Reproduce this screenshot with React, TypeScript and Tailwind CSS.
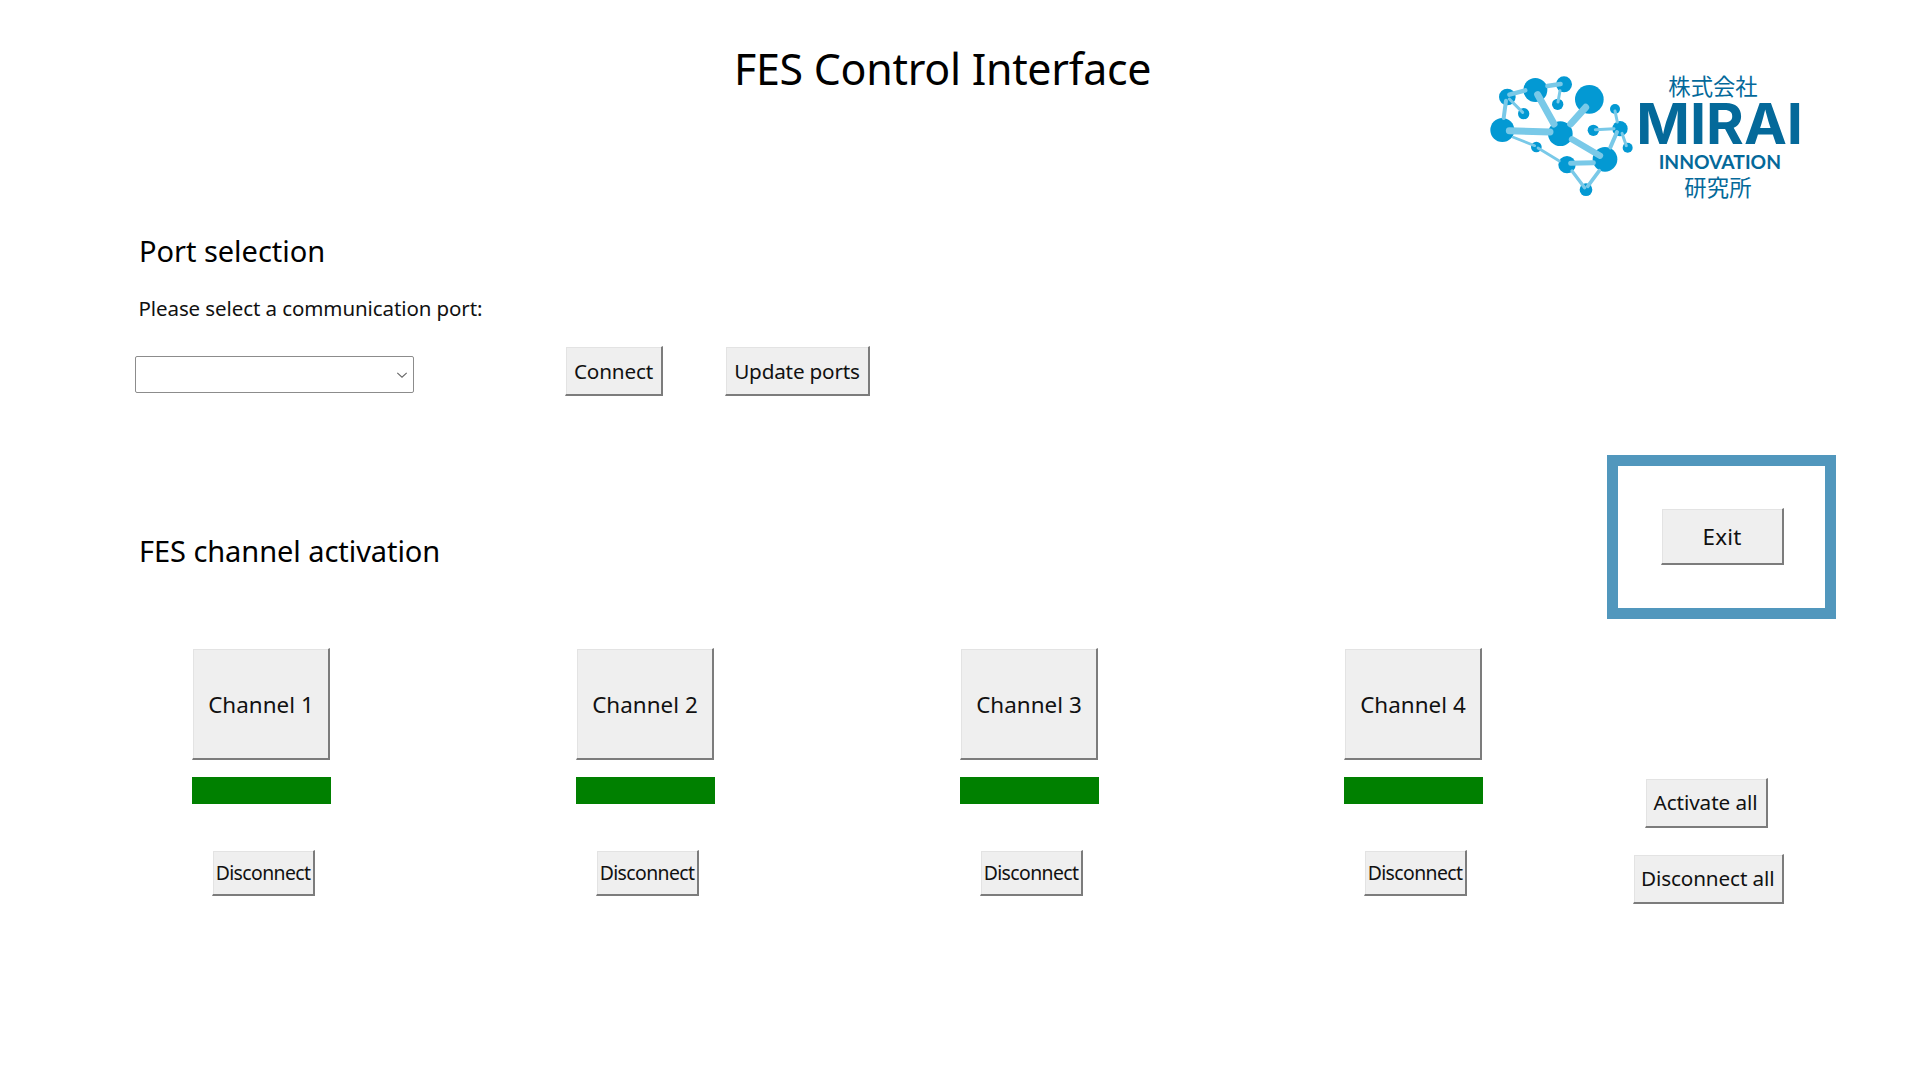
type ButtonProps = { label: string; className: string };

function RaisedButton({ label, className }: ButtonProps) {
  return (
    <button
      className={`flex shrink-0 items-center justify-center whitespace-nowrap border-t border-l border-r-[2.5px] border-b-[2.5px] border-t-white border-l-white border-r-[#7c7c7c] border-b-[#7c7c7c] bg-[#efefef] text-[#111] shadow-[inset_1px_1px_0_#e3e3e3] ${className}`}
    >
      {label}
    </button>
  );
}

const nodes: [number, number, number][] = [
  [196, 90, 36], [282, 73, 24], [358, 118, 43], [112, 111, 25], [161, 161, 17],
  [263, 133, 17], [97, 210, 36], [271, 221, 37], [370, 211, 17], [435, 147, 15],
  [450, 206, 23], [473, 263, 15], [199, 261, 16], [291, 314, 26], [405, 298, 37],
  [348, 389, 19],
];

const links: [number, number, number, number, number][] = [
  [118, 104, 166, 91, 13], [232, 78, 272, 72, 13], [270, 92, 264, 126, 9],
  [118, 117, 158, 157, 9], [108, 122, 101, 174, 12], [118, 212, 240, 216, 21],
  [203, 104, 252, 192, 21], [347, 142, 302, 192, 21], [306, 238, 390, 287, 19],
  [130, 232, 194, 257, 8], [204, 264, 268, 303, 8], [302, 310, 370, 308, 15],
  [306, 333, 344, 383, 10], [388, 332, 353, 379, 11], [441, 216, 421, 262, 12],
  [376, 209, 432, 206, 9], [435, 153, 442, 186, 9], [456, 220, 469, 257, 9],
];

function Logo() {
  return (
    <svg width="350" height="150" viewBox="0 0 1050 450" role="img" aria-label="Mirai Innovation">
      {nodes.map(([cx, cy, r]) => (
        <circle key={`${cx}-${cy}`} cx={cx} cy={cy} r={r} fill="#0399d3" />
      ))}
      {links.map(([x1, y1, x2, y2, w]) => (
        <line key={`${x1}-${y1}`} x1={x1} y1={y1} x2={x2} y2={y2} stroke="#79c9e8" strokeWidth={w} strokeLinecap="round" />
      ))}
      <g fill="#04699a">
        <text x="595" y="104" fontSize="67" fontWeight="400" textLength="268" style={{ fontFamily: '"Noto Sans CJK JP", sans-serif' }}>株式会社</text>
        <text x="499" y="253" fontSize="168" fontWeight="700" textLength="500" lengthAdjust="spacingAndGlyphs" style={{ fontFamily: '"Inter", sans-serif' }}>MIRAI</text>
        <text x="566" y="328" fontSize="56" fontWeight="700" textLength="367" lengthAdjust="spacingAndGlyphs" style={{ fontFamily: '"Lato", sans-serif' }}>INNOVATION</text>
        <text x="643" y="408" fontSize="67" fontWeight="400" textLength="202" style={{ fontFamily: '"Noto Sans CJK JP", sans-serif' }}>研究所</text>
      </g>
    </svg>
  );
}

function Channel({ number }: { number: number }) {
  return (
    <div className="w-[384px] shrink-0">
      <RaisedButton label={`Channel ${number}`} className="h-[112px] w-[138px] pt-[2px] pl-[1px] text-[22.4px] tracking-[0.05px]" />
      <div className="mt-[17px] h-[27px] w-[139px] bg-[#008000]" />
      <RaisedButton label="Disconnect" className="mt-[46px] ml-[20px] h-[46px] w-[103px] pt-[1px] text-[19.4px] tracking-[-0.6px]" />
    </div>
  );
}

export default function App() {
  return (
    <main className="flex h-[1080px] w-[1920px] flex-col overflow-hidden bg-white font-['Noto_Sans',sans-serif] text-black">
      <header className="flex h-[231px] shrink-0 items-start">
        <h1 className="mt-[39px] ml-[734px] w-[736px] shrink-0 text-[42.9px] leading-[60px] tracking-[-0.27px]">FES Control Interface</h1>
        <div className="mt-[60px]"><Logo /></div>
      </header>

      <div className="flex grow">
        <div className="w-[1607px] shrink-0">
          <section className="h-[300px]">
            <h2 className="ml-[139px] text-[29px] leading-[40px] tracking-[-0.03px]">Port selection</h2>
            <p className="mt-[22px] ml-[138.5px] text-[20.5px] leading-[30px] tracking-[-0.09px] text-[#111]">Please select a communication port:</p>
            <div className="mt-[23px] ml-[135px] flex items-start">
              <div className="mt-[10px] flex h-[37px] w-[279px] items-center justify-end rounded-[2px] border border-[#8c8c8c] pr-[5px]">
                <svg width="12" height="12" viewBox="0 0 12 12" fill="none" stroke="#666" strokeWidth="1.1">
                  <path d="M1.3 3.8 6 8.2l4.7-4.4" />
                </svg>
              </div>
              <RaisedButton label="Connect" className="ml-[151px] h-[50px] w-[98px] pt-[2px] text-[20.7px] tracking-[-0.15px]" />
              <RaisedButton label="Update ports" className="ml-[62px] h-[50px] w-[145px] pt-[2px] text-[20.7px] tracking-[-0.18px]" />
            </div>
          </section>

          <section>
            <h2 className="ml-[139px] text-[29px] leading-[40px] tracking-[-0.06px]">FES channel activation</h2>
            <div className="mt-[77px] ml-[192px] flex">
              {[1, 2, 3, 4].map((n) => (
                <Channel key={n} number={n} />
              ))}
            </div>
          </section>
        </div>

        <aside className="w-[313px] shrink-0">
          <div className="mt-[224px] flex h-[164px] w-[229px] items-start border-[11px] border-[#5197bd]">
            <RaisedButton label="Exit" className="mt-[42px] ml-[43px] h-[57px] w-[123px] pt-[1px] text-[22.4px] tracking-[0.18px]" />
          </div>
          <div className="mt-[159px] flex w-[177px] flex-col items-end">
            <RaisedButton label="Activate all" className="mr-[16.5px] h-[50px] w-[123px] text-[20.7px] tracking-[-0.07px]" />
            <RaisedButton label="Disconnect all" className="mt-[26px] h-[50px] w-[151.5px] text-[20.7px] tracking-[-0.1px]" />
          </div>
        </aside>
      </div>
    </main>
  );
}
